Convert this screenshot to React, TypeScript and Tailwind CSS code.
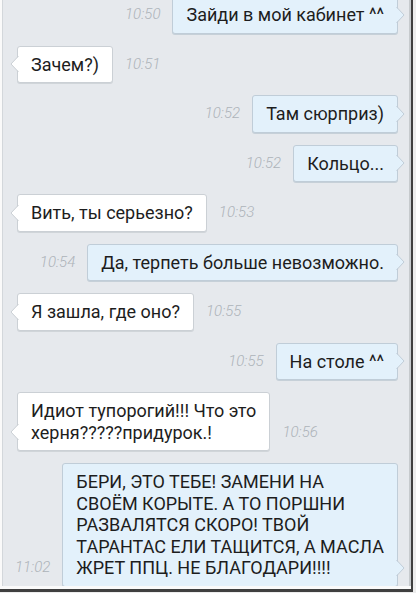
import React from 'react';

type Msg = {
  out: boolean;
  time: string;
  lines: string[];
};

const messages: Msg[] = [
  { out: true, time: '10:50', lines: ['Зайди в мой кабинет ^^'] },
  { out: false, time: '10:51', lines: ['Зачем?)'] },
  { out: true, time: '10:52', lines: ['Там сюрприз)'] },
  { out: true, time: '10:52', lines: ['Кольцо...'] },
  { out: false, time: '10:53', lines: ['Вить, ты серьезно?'] },
  { out: true, time: '10:54', lines: ['Да, терпеть больше невозможно.'] },
  { out: false, time: '10:55', lines: ['Я зашла, где оно?'] },
  { out: true, time: '10:55', lines: ['На столе ^^'] },
  { out: false, time: '10:56', lines: ['Идиот тупорогий!!! Что это', 'херня?????придурок.!'] },
  {
    out: true,
    time: '11:02',
    lines: [
      'БЕРИ, ЭТО ТЕБЕ! ЗАМЕНИ НА',
      'СВОЁМ КОРЫТЕ. А ТО ПОРШНИ',
      'РАЗВАЛЯТСЯ СКОРО! ТВОЙ',
      'ТАРАНТАС ЕЛИ ТАЩИТСЯ, А МАСЛА',
      'ЖРЕТ ППЦ. НЕ БЛАГОДАРИ!!!!',
    ],
  },
];

function Tail({ out }: { out: boolean }) {
  const fill = out ? '#e3f1fb' : '#ffffff';
  const stroke = out ? '#c0cdd8' : '#cbd0d5';
  if (out) {
    return (
      <svg className="absolute left-full -ml-[1px] bottom-[10px]" width="9" height="16" viewBox="0 0 9 16">
        <polygon points="0,0 8,8 0,16" fill={fill} />
        <polyline points="0.5,0 8,8 0.5,16" fill="none" stroke={stroke} strokeWidth="1" />
      </svg>
    );
  }
  return (
    <svg className="absolute right-full -mr-[1px] bottom-[10px]" width="9" height="16" viewBox="0 0 9 16">
      <polygon points="9,0 1,8 9,16" fill={fill} />
      <polyline points="8.5,0 1,8 8.5,16" fill="none" stroke={stroke} strokeWidth="1" />
    </svg>
  );
}

function Bubble({ msg }: { msg: Msg }) {
  const time = (
    <span className="pb-[8px] text-[15px] leading-[21.5px] italic font-light text-[#adb3b9]">{msg.time}</span>
  );
  const box = (
    <div
      className={
        msg.out
          ? 'relative rounded-[3px] border border-[#c0cdd8] bg-[#e3f1fb] px-[13px] py-[7px] shadow-[0_1px_0_#c6d0d8]'
          : 'relative rounded-[3px] border border-[#cbd0d5] bg-white px-[13px] py-[7px] shadow-[0_1px_0_#d0d5d9]'
      }
    >
      <Tail out={msg.out} />
      {msg.lines.map((l, i) => (
        <div key={i} className="whitespace-nowrap text-[18px] leading-[21.5px] text-[#1d1d1d]">
          {l}
        </div>
      ))}
    </div>
  );
  return (
    <div className={msg.out ? 'flex items-end justify-end gap-[12px]' : 'flex items-end justify-start gap-[12px]'}>
      {msg.out ? time : box}
      {msg.out ? box : time}
    </div>
  );
}

export default function App() {
  return (
    <div className="w-[416px] h-[593px] bg-[#ededed]" style={{ fontFamily: 'Roboto, "Noto Sans", sans-serif' }}>
      <div className="flex h-[592px] w-[413px] flex-col border-r-2 border-b-[3px] border-[#3f3f3f] bg-[#fafafa] pl-[2px] pb-[3px]">
        <div className="flex-1 overflow-hidden border-l border-r-2 border-l-[#d3d7db] border-r-[#c6cacd] bg-[#e6e9ed] pl-[14px] pr-[11px]">
          <div className="-mt-[4px] flex flex-col gap-[12px]">
            {messages.map((m, i) => (
              <Bubble key={i} msg={m} />
            ))}
          </div>
        </div>
      </div>
    </div>
  );
}
